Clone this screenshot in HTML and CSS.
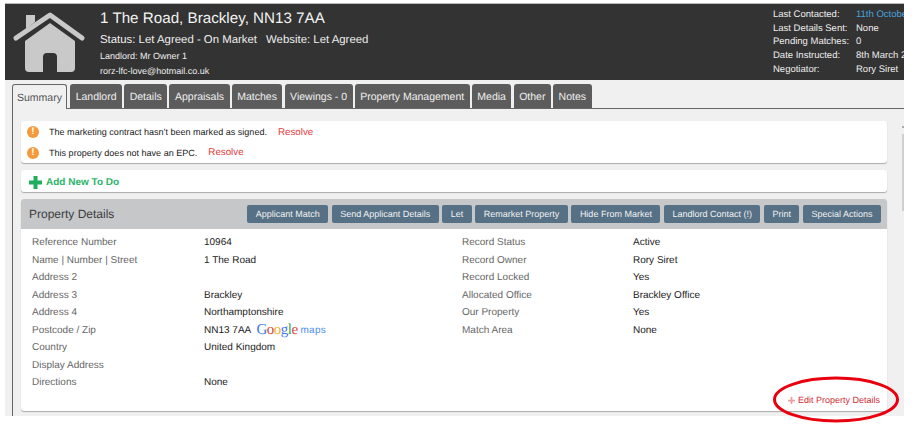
FILE: index.html
```html
<!DOCTYPE html>
<html lang="en">
<head>
<meta charset="utf-8">
<title>1 The Road, Brackley</title>
<link rel="stylesheet" href="styles.css">
</head>
<body>
<div class="app">
  <header class="hero">
    <svg class="house" width="72" height="62" viewBox="0 0 72 62">
      <path class="house-fill" d="M13 4h9v7l-9 7z"/>
      <path class="house-stroke" d="M3 27 37 4l32 23"/>
      <path class="house-fill" d="M37 12 62 30V57q0 4-4 4H44V46q0-4-4-4h-6q-4 0-4 4V61H16q-4 0-4-4V30z"/>
    </svg>
    <div class="hero-main">
      <h1 class="hero-title">1 The Road, Brackley, NN13 7AA</h1>
      <p class="hero-status"><span>Status: Let Agreed - On Market</span><span>Website: Let Agreed</span></p>
      <p class="hero-small">Landlord: Mr Owner 1</p>
      <p class="hero-small">rorz-lfc-love@hotmail.co.uk</p>
    </div>
    <dl class="hero-facts">
      <dt>Last Contacted:</dt><dd class="link">11th October</dd>
      <dt>Last Details Sent:</dt><dd>None</dd>
      <dt>Pending Matches:</dt><dd>0</dd>
      <dt>Date Instructed:</dt><dd>8th March 2</dd>
      <dt>Negotiator:</dt><dd>Rory Siret</dd>
    </dl>
  </header>

  <main class="workspace">
    <nav class="tabs">
      <a class="tab active">Summary</a>
      <a class="tab">Landlord</a>
      <a class="tab">Details</a>
      <a class="tab">Appraisals</a>
      <a class="tab">Matches</a>
      <a class="tab">Viewings - 0</a>
      <a class="tab">Property Management</a>
      <a class="tab">Media</a>
      <a class="tab">Other</a>
      <a class="tab">Notes</a>
    </nav>
    <div class="panel">
      <section class="card alerts">
        <div class="alert"><span class="alert-icon">!</span><span>The marketing contract hasn't been marked as signed.</span><a class="resolve">Resolve</a></div>
        <div class="alert"><span class="alert-icon">!</span><span>This property does not have an EPC.</span><a class="resolve">Resolve</a></div>
      </section>
      <section class="card todo">
        <svg width="13" height="13" viewBox="0 0 13 13"><path class="plus" d="M4.500 0h4v4.500H13v4H8.500V13h-4V8.500H0v-4h4.500z"/></svg>
        <span>Add New To Do</span>
      </section>
      <section class="card details">
        <div class="details-head">
          <h2>Property Details</h2>
          <div class="actions">
            <a class="btn">Applicant Match</a>
            <a class="btn">Send Applicant Details</a>
            <a class="btn">Let</a>
            <a class="btn">Remarket Property</a>
            <a class="btn">Hide From Market</a>
            <a class="btn">Landlord Contact (!)</a>
            <a class="btn">Print</a>
            <a class="btn">Special Actions</a>
          </div>
        </div>
        <div class="details-body">
          <dl class="fields">
            <dt>Reference Number</dt><dd>10964</dd>
            <dt>Name | Number | Street</dt><dd>1 The Road</dd>
            <dt>Address 2</dt><dd></dd>
            <dt>Address 3</dt><dd>Brackley</dd>
            <dt>Address 4</dt><dd>Northamptonshire</dd>
            <dt>Postcode / Zip</dt><dd>NN13 7AA <span class="gmaps"><span class="g-blue">G</span><span class="g-red">o</span><span class="g-yellow">o</span><span class="g-blue">g</span><span class="g-green">l</span><span class="g-red">e</span></span> <span class="gmaps-word">maps</span></dd>
            <dt>Country</dt><dd>United Kingdom</dd>
            <dt>Display Address</dt><dd></dd>
            <dt>Directions</dt><dd>None</dd>
          </dl>
          <dl class="fields">
            <dt>Record Status</dt><dd>Active</dd>
            <dt>Record Owner</dt><dd>Rory Siret</dd>
            <dt>Record Locked</dt><dd>Yes</dd>
            <dt>Allocated Office</dt><dd>Brackley Office</dd>
            <dt>Our Property</dt><dd>Yes</dd>
            <dt>Match Area</dt><dd>None</dd>
          </dl>
          <a class="edit">
            <svg width="7" height="7" viewBox="0 0 8 8"><path class="edit-icon" d="M3 0h2v3h3v2H5v3H3V5H0V3h3z"/></svg>
            Edit Property Details
          </a>
        </div>
      </section>
    </div>
    <div class="scrollbar"></div>
  </main>
</div>
<svg class="annotation" width="130" height="48" viewBox="0 0 130 48"><ellipse cx="64" cy="23.500" rx="61.500" ry="21.500"/></svg>
</body>
</html>
```
FILE: styles.css
```css
html, body { margin: 0; padding: 0; background: #fff; }
body {
  width: 912px;
  height: 426px;
  overflow: hidden;
  position: relative;
  font-family: "Liberation Sans", Arial, sans-serif;
  color: #222;
  text-rendering: geometricPrecision;
}
h1, h2, p, dl, dd { margin: 0; }

.app {
  width: 899px;
  margin-left: 5px;
  padding-top: 3px;
  overflow: hidden;
}

.hero {
  height: 77px;
  box-sizing: border-box;
  border-top: 1px solid #bbb;
  background: #333;
  color: #eee;
  display: flex;
  position: relative;
}
.house { margin: 7px 0 0 8px; flex: none; }
.house-fill { fill: #c9c9c9; }
.house-stroke { fill: none; stroke: #c9c9c9; stroke-width: 5; stroke-linecap: round; stroke-linejoin: round; }

.hero-main { margin-left: 15px; padding-top: 5px; flex: 1; }
.hero-title { font-size: 15.200px; font-weight: 400; line-height: 19px; color: #f2f2f2; }
.hero-status { display: flex; gap: 9px; margin-top: 5px; font-size: 11.400px; line-height: 15px; }
.hero-small { font-size: 9px; line-height: 15px; }
.hero-status + .hero-small { margin-top: 1px; }

.hero-facts {
  flex: none;
  width: 131px;
  display: grid;
  grid-template-columns: 83px 48px;
  align-content: start;
  padding-top: 4px;
  font-size: 9.500px;
  line-height: 13.700px;
  white-space: nowrap;
}
.hero-facts dd.link { color: #4aa3df; }

.workspace {
  height: 336px;
  background: #f0f0f0;
  position: relative;
  padding: 4px 0 0 7px;
  box-sizing: border-box;
}

.tabs { display: flex; gap: 2.200px; height: 25px; box-sizing: border-box; border-bottom: 1px solid #666; }
.tab {
  height: 24px;
  padding: 0 5.500px;
  background: #5c5c5c;
  color: #f0f0f0;
  font-size: 10.500px;
  line-height: 27px;
  border-radius: 3px 3px 0 0;
}
.tab.active {
  height: 25px;
  position: relative;
  background: #f0f0f0;
  color: #555;
  border: 1px solid #666;
  border-bottom: 0;
  box-sizing: border-box;
  line-height: 26px;
  padding: 0 4px;
  margin-right: 1px;
}

.panel {
  border-left: 1px solid #666;
  height: 308px;
  box-sizing: border-box;
  padding: 12px 0 0 8px;
  width: 875px;
}

.card {
  background: #fff;
  border-radius: 3px;
  box-shadow: 0 1px 1px #aaa;
  margin-bottom: 7px;
}
.alerts { height: 42px; font-size: 9.050px; color: #222; box-sizing: border-box; padding-top: 1px; }
.alert { height: 20.500px; display: flex; align-items: center; padding-left: 6px; }
.alert-icon {
  width: 12px; height: 12px; border-radius: 50%;
  background: #f59a3c; color: #fff;
  font: 700 10px/12px "Liberation Sans", sans-serif;
  text-align: center;
  margin-right: 10px;
}
.resolve { color: #e53a3a; margin-left: 11px; font-size: 9.750px; }

.todo {
  height: 22px;
  box-sizing: border-box;
  padding: 2px 0 0 8px;
  display: flex;
  align-items: center;
  gap: 4px;
  color: #2ab56a;
  font-size: 10px;
  font-weight: 700;
  margin-bottom: 7px;
}
.plus { fill: #1fae5e; }

.details { height: 212px; overflow: hidden; margin-bottom: 0; }
.details-head {
  height: 30px;
  background: #c5c7c9;
  display: flex;
  align-items: center;
  justify-content: space-between;
  padding: 0 6px 0 8px;
}
.details-head h2 { font-size: 12px; font-weight: 400; color: #3c3c3c; }
.actions { display: flex; gap: 3.500px; }
.btn {
  height: 18px;
  line-height: 18px;
  padding: 0 8.500px;
  background: #567086;
  color: #f2f2f2;
  font-size: 9px;
  border-radius: 2px;
  white-space: nowrap;
}

.details-body {
  position: relative;
  display: grid;
  grid-template-columns: 430px 1fr;
  padding: 5px 0 0 11px;
  height: 182px;
  box-sizing: border-box;
}
.fields {
  display: grid;
  grid-template-columns: 172px 1fr;
  grid-auto-rows: 17.500px;
  align-content: start;
  font-size: 10px;
  line-height: 17.500px;
}
.fields + .fields { grid-template-columns: 171px 1fr; }
.fields dt { color: #666; }
.fields dd { color: #222; }

.gmaps { font: 400 15px/17px "Liberation Serif", serif; letter-spacing: -0.500px; margin-left: 3px; vertical-align: -1px; }
.g-blue { color: #3b78e7; }
.g-red { color: #d9453a; }
.g-yellow { color: #eeb422; }
.g-green { color: #34a853; }
.gmaps-word { color: #4a8af0; font-weight: 400; font-size: 10px; letter-spacing: 0.300px; }

.edit {
  position: absolute;
  right: 7px;
  bottom: 4px;
  color: #d42b35;
  font-size: 9px;
  line-height: 14px;
  display: flex;
  align-items: center;
  gap: 3px;
}
.edit-icon { fill: #eba0a0; }

.scrollbar {
  position: absolute;
  left: 897px;
  top: 54px;
  width: 2px;
  height: 77px;
  background: #cfcfcf;
}
.scrollbar::before {
  content: "";
  position: absolute;
  left: 0;
  top: -8px;
  width: 2px;
  height: 2px;
  background: #aaa;
}

.annotation { position: absolute; left: 772px; top: 376px; }
.annotation ellipse { fill: none; stroke: #e8000f; stroke-width: 3; }
```
